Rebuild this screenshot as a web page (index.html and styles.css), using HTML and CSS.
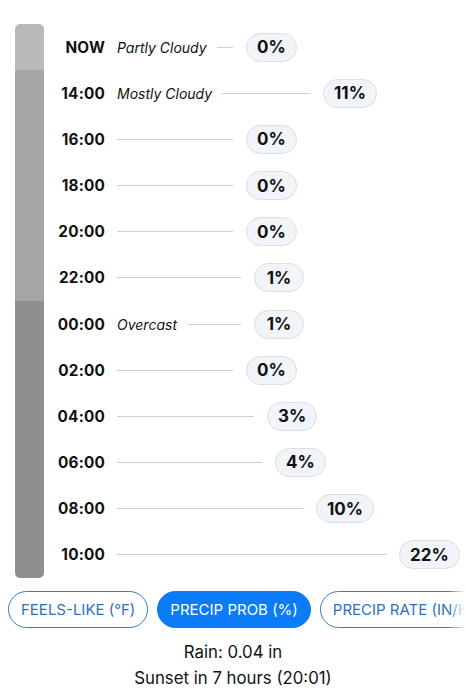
FILE: index.html
```html
<!DOCTYPE html>
<html>
<head>
<meta charset="utf-8">
<link rel="stylesheet" href="styles.css">
</head>
<body>
<div class="chart">
  <div class="sky">
    <div class="seg seg-light"></div>
    <div class="seg seg-mid"></div>
    <div class="seg seg-dark"></div>
  </div>
  <div class="rows">
    <div class="row"><span class="time">NOW</span><div class="track" style="width:129px"><span class="cond">Partly Cloudy</span><span class="line"></span></div><span class="pill">0%</span></div>
    <div class="row"><span class="time">14:00</span><div class="track" style="width:206px"><span class="cond">Mostly Cloudy</span><span class="line"></span></div><span class="pill">11%</span></div>
    <div class="row"><span class="time">16:00</span><div class="track" style="width:129px"><span class="line"></span></div><span class="pill">0%</span></div>
    <div class="row"><span class="time">18:00</span><div class="track" style="width:129px"><span class="line"></span></div><span class="pill">0%</span></div>
    <div class="row"><span class="time">20:00</span><div class="track" style="width:129px"><span class="line"></span></div><span class="pill">0%</span></div>
    <div class="row"><span class="time">22:00</span><div class="track" style="width:137px"><span class="line"></span></div><span class="pill">1%</span></div>
    <div class="row"><span class="time">00:00</span><div class="track" style="width:137px"><span class="cond">Overcast</span><span class="line"></span></div><span class="pill">1%</span></div>
    <div class="row"><span class="time">02:00</span><div class="track" style="width:129px"><span class="line"></span></div><span class="pill">0%</span></div>
    <div class="row"><span class="time">04:00</span><div class="track" style="width:150px"><span class="line"></span></div><span class="pill">3%</span></div>
    <div class="row"><span class="time">06:00</span><div class="track" style="width:158px"><span class="line"></span></div><span class="pill">4%</span></div>
    <div class="row"><span class="time">08:00</span><div class="track" style="width:199px"><span class="line"></span></div><span class="pill">10%</span></div>
    <div class="row"><span class="time">10:00</span><div class="track" style="width:282px"><span class="line"></span></div><span class="pill">22%</span></div>
  </div>
</div>
<div class="tabs-wrap">
  <div class="tabs">
    <span class="tab">FEELS-LIKE (°F)</span>
    <span class="tab active">PRECIP PROB (%)</span>
    <span class="tab">PRECIP RATE (IN/HR)</span>
  </div>
  <div class="fade"></div>
</div>
<div class="summary">
  <div>Rain: 0.04 in</div>
  <div>Sunset in 7 hours (20:01)</div>
</div>
</body>
</html>
```
FILE: styles.css
```css
html, body {
  margin: 0;
  padding: 0;
  background: #fff;
  width: 466px;
  overflow: hidden;
  font-family: Inter, "Noto Sans", "Liberation Sans", sans-serif;
  color: #111;
}
.chart {
  display: flex;
  padding: 24px 0 0 15px;
}
.sky {
  width: 29px;
  height: 554px;
  display: flex;
  flex-direction: column;
  border-radius: 5px;
  overflow: hidden;
  flex: none;
}
.seg-light { flex: 1; background: #b9b9b9; }
.seg-mid { flex: 5; background: #a5a5a5; }
.seg-dark { flex: 6; background: #8f8f8f; }
.rows {
  display: flex;
  flex-direction: column;
}
.row {
  height: 46.17px;
  display: flex;
  align-items: center;
}
.time {
  width: 61px;
  text-align: right;
  font-weight: 700;
  font-size: 15.3px;
  letter-spacing: 0.2px;
  margin-right: 12px;
  flex: none;
}
.track {
  display: flex;
  align-items: center;
  flex: none;
}
.cond {
  font-style: italic;
  font-size: 14px;
  margin-right: 10px;
  white-space: nowrap;
}
.line {
  flex: 1;
  height: 1px;
  background: #cfcfcf;
  margin-right: 13px;
}
.pill {
  height: 27px;
  padding: 0 10px;
  border: 1px solid #d9dee4;
  background: #f1f4f8;
  border-radius: 15px;
  font-weight: 700;
  font-size: 17px;
  display: flex;
  align-items: center;
  justify-content: center;
  min-width: 28px;
  flex: none;
}
.tabs-wrap {
  position: relative;
  margin-top: 13px;
  overflow: hidden;
}
.tabs {
  display: flex;
  gap: 9px;
  padding-left: 8px;
  white-space: nowrap;
}
.tab {
  height: 35px;
  border: 1px solid #3a79c2;
  border-radius: 19px;
  padding: 0 12px;
  color: #2c72bf;
  font-size: 15px;
  display: flex;
  align-items: center;
  flex: none;
}
.tab.active {
  background: #0b7bf7;
  border-color: #0b7bf7;
  color: #fff;
}
.fade {
  position: absolute;
  right: 0;
  top: 0;
  bottom: 0;
  width: 18px;
  background: linear-gradient(to right, rgba(255,255,255,0), #fff);
}
.summary {
  margin-top: 11px;
  text-align: center;
  font-size: 16.8px;
  line-height: 26px;
}
```
